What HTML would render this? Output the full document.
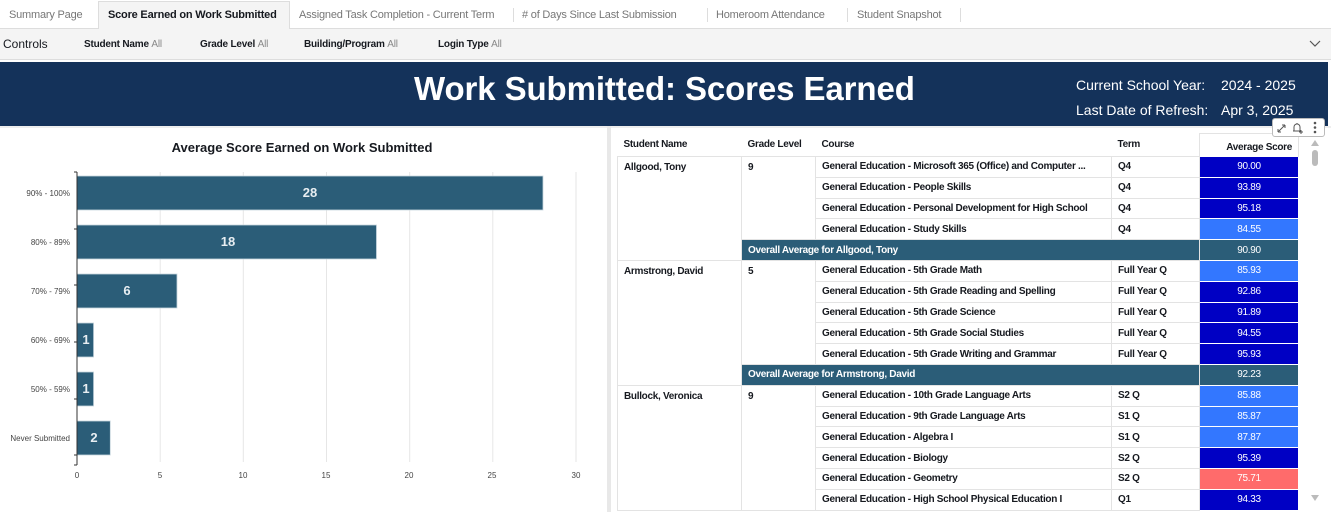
<!DOCTYPE html>
<html><head><meta charset="utf-8"><style>
*{margin:0;padding:0;box-sizing:border-box}
body{width:1331px;height:512px;overflow:hidden;background:#fff;font-family:"Liberation Sans",sans-serif;position:relative;color:#16191f}
.abs{position:absolute}
.tabs{top:0;left:0;width:1331px;height:29px;background:#fff;border-bottom:1px solid #ddd}
.tab{position:absolute;top:0;height:29px;line-height:31px;font-size:11px;color:#777;letter-spacing:-0.2px}
.sep{position:absolute;top:8px;width:1px;height:14px;background:#ddd}
.ctrl{top:29px;left:0;width:1331px;height:31px;background:#f4f4f4;border-bottom:1px solid #ddd;font-size:10px}
.ctrl span{position:absolute;top:10px;font-weight:bold;letter-spacing:-0.2px}
.ctrl i{font-style:normal;font-weight:normal;color:#888}
.banner{top:62px;left:0;width:1328px;height:64px;background:#14325a;color:#fff}
table{border-collapse:collapse;table-layout:fixed;font-size:10px;font-weight:bold;letter-spacing:-0.3px}
td{border:1px solid #e3e3e3;height:20.8px;padding:0 6px;white-space:nowrap;overflow:hidden;vertical-align:middle}
td.top{vertical-align:top;padding-top:5px}
td.s{color:#fff;text-align:center;border:1px solid #fff;font-weight:normal}
.db{background:#0000c4}.lb{background:#3377ff}.rd{background:#ff6b6b}
.ov{background:#2b5d78;color:#fff}
th{font-size:10px;text-align:left;padding:0 6px;height:23px;font-weight:bold;letter-spacing:-0.3px}
</style></head><body>
<div class="abs tabs">
<div class="tab" style="left:9px">Summary Page</div>
<div class="abs" style="left:98px;top:1px;width:192px;height:29px;background:#f4f4f4;border:1px solid #ddd;border-bottom:none"></div>
<div class="tab" style="left:108px;color:#16191f;font-weight:bold">Score Earned on Work Submitted</div>
<div class="tab" style="left:299px">Assigned Task Completion - Current Term</div>
<div class="sep" style="left:513px"></div>
<div class="tab" style="left:522px"># of Days Since Last Submission</div>
<div class="sep" style="left:707px"></div>
<div class="tab" style="left:716px">Homeroom Attendance</div>
<div class="sep" style="left:847px"></div>
<div class="tab" style="left:857px">Student Snapshot</div>
<div class="sep" style="left:960px"></div>
</div>
<div class="abs ctrl">
<div class="abs" style="left:3px;top:8px;font-size:12px">Controls</div>
<span style="left:84px">Student Name <i>All</i></span>
<span style="left:200px">Grade Level <i>All</i></span>
<span style="left:304px">Building/Program <i>All</i></span>
<span style="left:438px">Login Type <i>All</i></span>
<svg class="abs" style="left:1309px;top:11px" width="12" height="8"><path d="M1 1L6 6L11 1" fill="none" stroke="#555" stroke-width="1.2"/></svg>
</div>
<div class="abs" style="top:60px;left:0;width:1331px;height:2px;background:#fff"></div>
<div class="abs banner">
<div class="abs" style="left:414px;top:8px;font-size:33px;font-weight:bold;letter-spacing:-0.1px">Work Submitted: Scores Earned</div>
<div class="abs" style="left:1076px;top:15px;font-size:14px">Current School Year:</div>
<div class="abs" style="left:1221px;top:15px;font-size:14px">2024 - 2025</div>
<div class="abs" style="left:1076px;top:40px;font-size:14px">Last Date of Refresh:</div>
<div class="abs" style="left:1221px;top:40px;font-size:14px">Apr 3, 2025</div>
</div>
<div class="abs" style="left:0;top:126px;width:1331px;height:2px;background:#eee"></div>
<div class="abs" style="left:607px;top:126px;width:4px;height:386px;background:#e8e8e8"></div>
<svg class="abs" style="left:0;top:128px" width="607" height="384" font-family="Liberation Sans,sans-serif">
<text x="302" y="24" text-anchor="middle" font-size="13" font-weight="bold" fill="#16191f">Average Score Earned on Work Submitted</text>
<g stroke="#e6e6e6">
<line x1="160.2" y1="44" x2="160.2" y2="334"/><line x1="243.3" y1="44" x2="243.3" y2="334"/><line x1="326.5" y1="44" x2="326.5" y2="334"/><line x1="409.7" y1="44" x2="409.7" y2="334"/><line x1="492.8" y1="44" x2="492.8" y2="334"/><line x1="576" y1="44" x2="576" y2="334"/>
</g>
<g fill="#2b5d78" stroke="#c9d7df" stroke-width="0.8">
<rect x="77" y="48" width="466" height="34"/>
<rect x="77" y="97" width="299.5" height="34"/>
<rect x="77" y="146" width="100" height="34"/>
<rect x="77" y="195" width="16.6" height="34"/>
<rect x="77" y="244" width="16.6" height="34"/>
<rect x="77" y="293" width="33.3" height="34"/>
</g>
<g fill="#e8eef2" font-size="13" font-weight="bold" text-anchor="middle">
<text x="310" y="69">28</text><text x="228" y="118">18</text><text x="127" y="167">6</text><text x="86" y="216">1</text><text x="86" y="265">1</text><text x="94" y="314">2</text>
</g>
<g stroke="#333"><line x1="77" y1="44" x2="77" y2="337"/>
<line x1="74" y1="44" x2="77" y2="44"/><line x1="74" y1="101" x2="77" y2="101"/><line x1="74" y1="157" x2="77" y2="157"/><line x1="74" y1="214" x2="77" y2="214"/><line x1="74" y1="271" x2="77" y2="271"/><line x1="74" y1="327" x2="77" y2="327"/><line x1="74" y1="337" x2="77" y2="337"/></g>
<g font-size="8" fill="#444" text-anchor="end">
<text x="70" y="68">90% - 100%</text><text x="70" y="117">80% - 89%</text><text x="70" y="166">70% - 79%</text><text x="70" y="215">60% - 69%</text><text x="70" y="264">50% - 59%</text><text x="70" y="313">Never Submitted</text>
</g>
<g font-size="8" fill="#444" text-anchor="middle">
<text x="77" y="350">0</text><text x="160" y="350">5</text><text x="243" y="350">10</text><text x="326" y="350">15</text><text x="409" y="350">20</text><text x="492" y="350">25</text><text x="576" y="350">30</text>
</g>
</svg>
<div class="abs" style="left:617px;top:133px">
<table style="width:681px">
<colgroup><col style="width:124px"><col style="width:74px"><col style="width:296px"><col style="width:88px"><col style="width:99px"></colgroup>
<tr><th>Student Name</th><th>Grade Level</th><th>Course</th><th>Term</th><th style="text-align:right;border:1px solid #e3e3e3;border-bottom:none;padding-top:4px">Average Score</th></tr>
<tr><td class="top" rowspan="5">Allgood, Tony</td><td class="top" rowspan="4">9</td><td>General Education - Microsoft 365 (Office) and Computer ...</td><td>Q4</td><td class="s db">90.00</td></tr>
<tr><td>General Education - People Skills</td><td>Q4</td><td class="s db">93.89</td></tr>
<tr><td>General Education - Personal Development for High School</td><td>Q4</td><td class="s db">95.18</td></tr>
<tr><td>General Education - Study Skills</td><td>Q4</td><td class="s lb">84.55</td></tr>
<tr><td class="ov" colspan="3">Overall Average for Allgood, Tony</td><td class="s ov">90.90</td></tr>
<tr><td class="top" rowspan="6">Armstrong, David</td><td class="top" rowspan="5">5</td><td>General Education - 5th Grade Math</td><td>Full Year Q</td><td class="s lb">85.93</td></tr>
<tr><td>General Education - 5th Grade Reading and Spelling</td><td>Full Year Q</td><td class="s db">92.86</td></tr>
<tr><td>General Education - 5th Grade Science</td><td>Full Year Q</td><td class="s db">91.89</td></tr>
<tr><td>General Education - 5th Grade Social Studies</td><td>Full Year Q</td><td class="s db">94.55</td></tr>
<tr><td>General Education - 5th Grade Writing and Grammar</td><td>Full Year Q</td><td class="s db">95.93</td></tr>
<tr><td class="ov" colspan="3">Overall Average for Armstrong, David</td><td class="s ov">92.23</td></tr>
<tr><td class="top" rowspan="6">Bullock, Veronica</td><td class="top" rowspan="6">9</td><td>General Education - 10th Grade Language Arts</td><td>S2 Q</td><td class="s lb">85.88</td></tr>
<tr><td>General Education - 9th Grade Language Arts</td><td>S1 Q</td><td class="s lb">85.87</td></tr>
<tr><td>General Education - Algebra I</td><td>S1 Q</td><td class="s lb">87.87</td></tr>
<tr><td>General Education - Biology</td><td>S2 Q</td><td class="s db">95.39</td></tr>
<tr><td>General Education - Geometry</td><td>S2 Q</td><td class="s rd">75.71</td></tr>
<tr><td>General Education - High School Physical Education I</td><td>Q1</td><td class="s db">94.33</td></tr>
</table></div>
<svg class="abs" style="left:1309px;top:138px" width="12" height="374">
<path d="M2 8L6 2L10 8Z" fill="#bbb"/><rect x="3" y="12" width="6" height="16" rx="3" fill="#bbb"/><path d="M2 357L6 363L10 357Z" fill="#bbb"/>
</svg>
<div class="abs" style="left:1272px;top:118px;width:53px;height:19px;background:#fff;border:1px solid #bbb;border-radius:3px"></div>
<svg class="abs" style="left:1272px;top:118px" width="53" height="19" fill="none" stroke="#555" stroke-width="1">
<path d="M6 14L13 7M6 14V11M6 14H9M13 7H10M13 7V10"/>
<path d="M21 13H29M22 13V9A3 3 0 0 1 28 9V13M25 5V6M27 14H31M29 12V16"/>
<circle cx="43" cy="5" r="0.8" fill="#555"/><circle cx="43" cy="9.5" r="0.8" fill="#555"/><circle cx="43" cy="14" r="0.8" fill="#555"/>
</svg>
</body></html>
